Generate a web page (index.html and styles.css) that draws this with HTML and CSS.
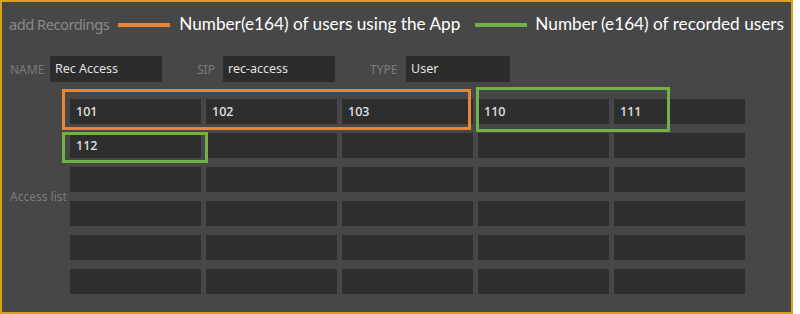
FILE: index.html
```html
<!DOCTYPE html>
<html>
<head>
<meta charset="utf-8">
<link rel="stylesheet" href="styles.css">
</head>
<body>
<div class="frame">
  <div class="header">
    <span class="title">add Recordings</span>
    <span class="swatch orange"></span>
    <span class="legend">Number(e164) of users using the App</span>
    <span class="swatch green"></span>
    <span class="legend">Number (e164) of recorded users</span>
  </div>
  <div class="fields">
    <span class="lbl lbl-name">NAME</span>
    <div class="input in-name">Rec Access</div>
    <span class="lbl lbl-sip">SIP</span>
    <div class="input in-sip">rec-access</div>
    <span class="lbl lbl-type">TYPE</span>
    <div class="input in-type">User</div>
  </div>
  <div class="access">
    <div class="access-label">Access list</div>
    <div class="grid">
      <div class="cell">101</div><div class="cell">102</div><div class="cell">103</div><div class="cell">110</div><div class="cell">111</div>
      <div class="cell">112</div><div class="cell"></div><div class="cell"></div><div class="cell"></div><div class="cell"></div>
      <div class="cell"></div><div class="cell"></div><div class="cell"></div><div class="cell"></div><div class="cell"></div>
      <div class="cell"></div><div class="cell"></div><div class="cell"></div><div class="cell"></div><div class="cell"></div>
      <div class="cell"></div><div class="cell"></div><div class="cell"></div><div class="cell"></div><div class="cell"></div>
      <div class="cell"></div><div class="cell"></div><div class="cell"></div><div class="cell"></div><div class="cell"></div>
      <div class="hl hl-orange"></div>
      <div class="hl hl-green1"></div>
      <div class="hl hl-green2"></div>
    </div>
  </div>
</div>
</body>
</html>
```
FILE: styles.css
```css
html, body {
  margin: 0;
  padding: 0;
  background: #ffffff;
}
.frame {
  width: 789px;
  height: 310px;
  background: #474747;
  border: 2px solid #d9a21b;
  box-sizing: content-box;
  font-family: "Open Sans", "DejaVu Sans", sans-serif;
  overflow: hidden;
}
.header {
  display: flex;
  align-items: center;
  height: 46px;
  padding-left: 7px;
  white-space: nowrap;
}
.header > * { flex-shrink: 0; }
.title {
  font-family: "Noto Sans", sans-serif;
  font-size: 14.7px;
  color: #8a8a8a;
  letter-spacing: -0.5px;
  margin-right: 9px;
  margin-top: -2px;
}
.swatch {
  display: inline-block;
  width: 52px;
  height: 4px;
  margin-right: 9px;
}
.swatch.orange { background: #e88638; }
.swatch.green { background: #72b04a; margin-left: 15px; margin-right: 8px; }
.legend {
  font-family: "Lato", sans-serif;
  font-size: 17.2px;
  color: #ffffff;
  margin-top: -3px;
}
.fields {
  display: flex;
  align-items: center;
  height: 26px;
  margin-top: 8px;
  padding-left: 8px;
}
.lbl {
  font-family: "Noto Sans", sans-serif;
  font-size: 12px;
  color: #7a7a7a;
}
.lbl-name { width: 40px; }
.lbl-sip { margin-left: 35px; width: 26px; }
.lbl-type { margin-left: 35px; width: 36px; }
.input {
  height: 26px;
  line-height: 26px;
  background: #2c2c2c;
  color: #e2e2e2;
  font-family: "Noto Sans", sans-serif;
  font-size: 12.5px;
  padding-left: 5px;
  box-sizing: border-box;
}
.in-name { width: 112px; }
.in-sip { width: 112px; }
.in-type { width: 104px; }
.access {
  display: flex;
  margin-top: 17px;
}
.access-label {
  width: 68px;
  padding-left: 8px;
  box-sizing: border-box;
  font-family: "Noto Sans", sans-serif;
  font-size: 12px;
  color: #7a7a7a;
  padding-top: 89px;
  white-space: nowrap;
}
.grid {
  position: relative;
  display: grid;
  grid-template-columns: repeat(5, 131px);
  grid-auto-rows: 25px;
  column-gap: 5px;
  row-gap: 9px;
}
.cell {
  background: #2e2e2e;
  color: #e6e6e6;
  font-family: "Noto Sans", sans-serif;
  font-size: 12.5px;
  font-weight: 500;
  line-height: 25px;
  padding-left: 6px;
}
.hl {
  position: absolute;
  box-sizing: border-box;
  border: 3px solid;
}
.hl-orange {
  border-color: #e88638;
  left: -8px;
  top: -10px;
  width: 409px;
  height: 41px;
}
.hl-green1 {
  border-color: #72b04a;
  left: 406px;
  top: -12px;
  width: 194px;
  height: 45px;
}
.hl-green2 {
  border-color: #72b04a;
  left: -8px;
  top: 33px;
  width: 146px;
  height: 31px;
}
```
